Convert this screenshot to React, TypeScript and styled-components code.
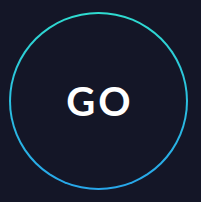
import styled, { createGlobalStyle } from "styled-components";

const GlobalStyle = createGlobalStyle`
  html, body {
    margin: 0;
    padding: 0;
    background: #141627;
  }
`;

const Page = styled.div`
  width: 201px;
  height: 202px;
  box-sizing: border-box;
  padding: 12px 0 0 9px;
  background: #141627;
`;

const Ring = styled.button`
  width: 179px;
  height: 178px;
  padding: 2px;
  border: none;
  border-radius: 50%;
  background: linear-gradient(180deg, #2fdcd0 0%, #2bc0e0 50%, #28a6ea 100%);
  cursor: pointer;
  display: block;
`;

const Face = styled.div`
  width: 100%;
  height: 100%;
  border-radius: 50%;
  background: #141627;
  display: flex;
  align-items: center;
  justify-content: center;
  box-sizing: border-box;
`;

const Label = styled.span`
  font-family: Lato, "Open Sans", sans-serif;
  font-weight: 700;
  font-size: 40px;
  letter-spacing: 3px;
  margin-right: -3px;
  color: #ffffff;
  line-height: 1;
`;

export default function App() {
  return (
    <>
      <GlobalStyle />
      <Page>
        <Ring>
          <Face>
            <Label>GO</Label>
          </Face>
        </Ring>
      </Page>
    </>
  );
}
